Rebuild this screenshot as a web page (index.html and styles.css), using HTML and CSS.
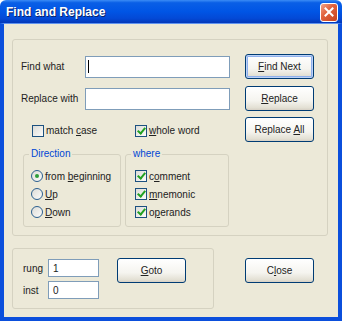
FILE: index.html
```html
<!DOCTYPE html>
<html lang="en">
<head>
  <meta charset="UTF-8" />
  <title>Find and Replace</title>
  <link rel="stylesheet" href="styles.css">
</head>
<body>

<div class="window">
  <div class="titlebar">
    <span class="title">Find and Replace</span>
    <span class="close-btn">
      <svg width="10" height="10" viewBox="0 0 10 10"><path d="M1.5 1.5 L8.5 8.5 M8.5 1.5 L1.5 8.5" stroke="#fff" stroke-width="2" stroke-linecap="square"/></svg>
    </span>
  </div>

  <div class="client">

    <div class="group main-group">
      <div class="fields">
        <div class="field-row">
          <span class="field-label">Find what</span>
          <div class="textbox wide"><span class="caret"></span></div>
        </div>
        <div class="field-row second">
          <span class="field-label">Replace with</span>
          <div class="textbox wide"></div>
        </div>

        <div class="check-row">
          <span class="option match"><span class="checkbox"></span><span>match <u>c</u>ase</span></span>
          <span class="option"><span class="checkbox checked"></span><span><u>w</u>hole word</span></span>
        </div>

        <div class="sub-groups">
          <div class="subgroup direction">
            <span class="legend">Direction</span>
            <span class="option"><span class="radio selected"></span><span>from <u>b</u>eginning</span></span>
            <span class="option"><span class="radio"></span><span><u>U</u>p</span></span>
            <span class="option"><span class="radio"></span><span><u>D</u>own</span></span>
          </div>
          <div class="subgroup where">
            <span class="legend">where</span>
            <span class="option"><span class="checkbox checked"></span><span>c<u>o</u>mment</span></span>
            <span class="option"><span class="checkbox checked"></span><span><u>m</u>nemonic</span></span>
            <span class="option"><span class="checkbox checked"></span><span>o<u>p</u>erands</span></span>
          </div>
        </div>
      </div>

      <div class="buttons">
        <button class="btn default"><u>F</u>ind Next</button>
        <button class="btn"><u>R</u>eplace</button>
        <button class="btn last">Replace <u>A</u>ll</button>
      </div>
    </div>

    <div class="bottom-row">
      <div class="group goto-group">
        <div class="goto-fields">
          <div class="small-row">
            <span class="small-label">rung</span>
            <div class="textbox small">1</div>
          </div>
          <div class="small-row">
            <span class="small-label">inst</span>
            <div class="textbox small">0</div>
          </div>
        </div>
        <button class="btn goto"><u>G</u>oto</button>
      </div>
      <button class="btn close">C<u>l</u>ose</button>
    </div>

  </div>
</div>

</body>
</html>
```

FILE: styles.css
```css
body {
  margin: 0;
  padding: 0;
  font-family: 'Liberation Sans', Arial, sans-serif;
  font-size: 10px;
  color: #222;
  background: #fff;
}

.window {
  width: 342px;
  height: 321px;
  display: flex;
  flex-direction: column;
}

.titlebar {
  height: 23px;
  flex-shrink: 0;
  display: flex;
  align-items: center;
  justify-content: space-between;
  background: linear-gradient(#3b8cf5, #0a5fe6 12%, #0055e5 50%, #0349d6 80%, #0338b8);
  border-top-left-radius: 6px;
  border-top-right-radius: 6px;
  padding: 0 4px 0 6px;
}

.title {
  color: #fff;
  font-weight: bold;
  font-size: 12px;
  text-shadow: 1px 1px 0 #0a246a;
  padding-top: 1px;
}

.close-btn {
  width: 16px;
  height: 17px;
  margin-top: 1px;
  border: 1px solid #fff;
  border-radius: 3px;
  background: linear-gradient(135deg, #f0a48b, #e2643f 40%, #c6421d);
  display: flex;
  align-items: center;
  justify-content: center;
}

.client {
  flex: 1;
  background: #ece9d8;
  border: 4px solid #0b4fdc;
  border-top: 1px solid #5f93f0;
  padding: 15px 10px 0 8px;
}

.group {
  border: 1px solid #d5d2c1;
  border-radius: 3px;
  box-sizing: border-box;
}

.main-group {
  height: 197px;
  display: flex;
  padding: 14px 0 0 8px;
}

.fields {
  width: 209px;
  padding-top: 2px;
}

.field-row {
  display: flex;
  align-items: center;
  height: 21px;
}

.field-row.second {
  margin-top: 11px;
}

.field-label {
  width: 64px;
}

.textbox {
  box-sizing: border-box;
  background: #fff;
  border: 1px solid #7f9db9;
  display: flex;
  align-items: center;
}

.textbox.wide {
  width: 145px;
  height: 22px;
}

.caret {
  width: 1px;
  height: 13px;
  margin-left: 2px;
  background: #000;
}

.check-row {
  display: flex;
  margin-top: 15px;
  padding-left: 11px;
  height: 13px;
}

.option {
  display: flex;
  align-items: center;
  height: 18px;
}

.check-row .option {
  height: 13px;
}

.option.match {
  width: 103px;
}

.checkbox,
.radio {
  width: 12px;
  height: 12px;
  box-sizing: border-box;
  border: 1px solid #1c5180;
  background: linear-gradient(135deg, #dcdcd7, #fbfbf9);
  margin-right: 2px;
  flex-shrink: 0;
  position: relative;
}

.radio {
  border-radius: 50%;
  border-color: #2a5f8f;
}

.checkbox.checked::after {
  content: "";
  position: absolute;
  left: 3px;
  top: 0px;
  width: 3px;
  height: 6px;
  border: solid #21a121;
  border-width: 0 2px 2px 0;
  transform: rotate(40deg);
}

.radio.selected::after {
  content: "";
  position: absolute;
  left: 3px;
  top: 3px;
  width: 4px;
  height: 4px;
  border-radius: 50%;
  background: #2d9d3a;
}

.sub-groups {
  display: flex;
  gap: 4px;
  margin-top: 17px;
  margin-left: 2px;
}

.subgroup {
  position: relative;
  height: 73px;
  box-sizing: border-box;
  border: 1px solid #d5d2c1;
  border-radius: 3px;
  padding: 12px 0 0 7px;
  display: flex;
  flex-direction: column;
}

.subgroup.direction {
  width: 98px;
}

.subgroup.where {
  width: 104px;
  padding-left: 9px;
}

.legend {
  position: absolute;
  top: -7px;
  left: 5px;
  padding: 0 2px;
  background: #ece9d8;
  color: #0046d5;
}

.buttons {
  display: flex;
  flex-direction: column;
  margin-left: 15px;
}

.btn {
  width: 69px;
  height: 25px;
  box-sizing: border-box;
  font-family: 'Liberation Sans', Arial, sans-serif;
  font-size: 10px;
  color: #222;
  border: 1px solid #003c74;
  border-radius: 3px;
  background: linear-gradient(#ffffff, #f5f4ef 60%, #e3e0d4 90%, #d6d0c5);
  padding: 0;
  margin: 0;
}

.btn.default {
  box-shadow: inset 0 0 0 1px #bcd2f7, inset 0 0 0 2px #8fb0ec;
}

.buttons .btn + .btn {
  margin-top: 7px;
}

.buttons .btn.last {
  margin-top: 6px;
}

.bottom-row {
  display: flex;
  align-items: flex-start;
  margin-top: 12px;
}

.goto-group {
  width: 202px;
  height: 61px;
  display: flex;
  align-items: flex-start;
  padding: 10px 0 0 10px;
}

.small-row {
  display: flex;
  align-items: center;
}

.small-row + .small-row {
  margin-top: 4px;
}

.small-label {
  width: 25px;
}

.textbox.small {
  width: 51px;
  height: 18px;
  padding-left: 4px;
}

.btn.goto {
  margin: -1px 0 0 18px;
}

.btn.close {
  margin: 10px 0 0 31px;
}
```
